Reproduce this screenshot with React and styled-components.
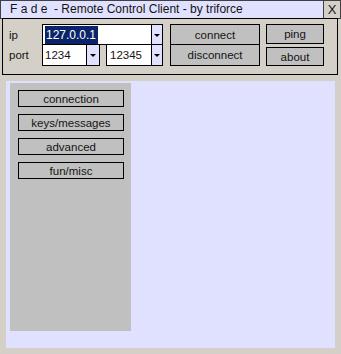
import React from 'react';
import styled, { createGlobalStyle } from 'styled-components';

const Global = createGlobalStyle`
  html, body { margin: 0; padding: 0; background: #d4d0c8; }
  body {
    width: 341px; height: 354px; overflow: hidden;
    font-family: "Liberation Sans", Arial, sans-serif;
    font-size: 11px; color: #141414;
  }
  * { box-sizing: border-box; }
`;

const Window = styled.div`
  width: 341px;
  height: 354px;
  display: flex;
  flex-direction: column;
`;

const TitleBar = styled.div`
  display: flex;
  height: 19px;
`;

const Title = styled.div`
  flex: 1;
  background: #e0e0ff;
  border: 1px solid #404040;
  border-right: none;
  padding-left: 9px;
  line-height: 17px;
  white-space: pre;
  font-size: 12px;
`;

const Close = styled.div`
  width: 18px;
  border: 1px solid #404040;
  display: flex;
  align-items: center;
  justify-content: center;
  font-size: 13px;
  line-height: 1;
`;

const Panel = styled.div`
  margin: -1px 0 0 2px;
  width: 336px;
  height: 57px;
  border: 1px solid #000;
  display: flex;
  padding-top: 5px;
`;

const Labels = styled.div`
  width: 39px;
  display: flex;
  flex-direction: column;
`;

const Label = styled.div`
  height: ${p => p.$h}px;
  margin-top: ${p => p.$mt || 0}px;
  padding-left: 6px;
  display: flex;
  align-items: center;
  font-size: 11.5px;
`;

const FormCol = styled.div`
  width: 121px;
  display: flex;
  flex-direction: column;
`;

const Row = styled.div`
  display: flex;
  gap: ${p => p.$gap || 0}px;
  margin-top: ${p => p.$mt || 0}px;
`;

const Field = styled.div`
  width: ${p => p.$w}px;
  height: ${p => p.$h}px;
  border: 1px solid #000;
  background: #fff;
  display: flex;
`;

const FieldText = styled.div`
  flex: 1;
  display: flex;
  align-items: center;
  padding-left: ${p => p.$pl || 2}px;
  font-size: 11.5px;
  color: #1a1010;
`;

const Selected = styled.span`
  background: #0a246a;
  color: #fff;
  padding: 2px 2px 2px 1px;
  font-size: 12px;
`;

const Drop = styled.div`
  width: ${p => p.$w}px;
  border-left: 1px solid #000;
  background: #e0e0ff;
  display: flex;
  align-items: center;
  justify-content: center;
  &::after {
    content: "";
    border-left: 3px solid transparent;
    border-right: 3px solid transparent;
    border-top: 3px solid #000;
    margin-top: 1px;
  }
`;

const BtnCol = styled.div`
  width: ${p => p.$w}px;
  margin-left: ${p => p.$ml}px;
  display: flex;
  flex-direction: column;
`;

const Button = styled.div`
  height: ${p => p.$h}px;
  margin-top: ${p => p.$mt || 0}px;
  background: #c0c0c0;
  border: 1px solid #000;
  display: flex;
  align-items: center;
  justify-content: center;
  font-size: 11.5px;
  color: #141414;
`;

const Content = styled.div`
  margin: 6px 0 0 6px;
  width: 329px;
  height: 267px;
  background: #e0e0ff;
  padding: 2px 0 0 4px;
`;

const Sidebar = styled.div`
  width: 121px;
  height: 248px;
  background: #c0c0c0;
  padding: 7px 0 0 8px;
  display: flex;
  flex-direction: column;
  gap: 7px;
`;

const SideButton = styled.div`
  width: 106px;
  height: 17px;
  border: 1px solid #000;
  display: flex;
  align-items: center;
  justify-content: center;
  font-size: 11.5px;
  color: #141414;
`;

export default function App() {
  return (
    <Window>
      <Global />
      <TitleBar>
        <Title>{'F a d e  - Remote Control Client - by triforce'}</Title>
        <Close>X</Close>
      </TitleBar>
      <Panel>
        <Labels>
          <Label $h={21}>ip</Label>
          <Label $h={22} $mt={-1}>port</Label>
        </Labels>
        <FormCol>
          <Row>
            <Field $w={121} $h={21}>
              <FieldText $pl={2}><Selected>127.0.0.1</Selected></FieldText>
              <Drop $w={11} />
            </Field>
          </Row>
          <Row $mt={-1} $gap={6}>
            <Field $w={58} $h={22}>
              <FieldText $pl={2}>1234</FieldText>
              <Drop $w={13} />
            </Field>
            <Field $w={57} $h={22}>
              <FieldText $pl={3}>12345</FieldText>
              <Drop $w={11} />
            </Field>
          </Row>
        </FormCol>
        <BtnCol $w={90} $ml={7}>
          <Button $h={21}>connect</Button>
          <Button $h={22} $mt={-1}>disconnect</Button>
        </BtnCol>
        <BtnCol $w={58} $ml={6}>
          <Button $h={20}>ping</Button>
          <Button $h={19} $mt={3}>about</Button>
        </BtnCol>
      </Panel>
      <Content>
        <Sidebar>
          <SideButton>connection</SideButton>
          <SideButton>keys/messages</SideButton>
          <SideButton>advanced</SideButton>
          <SideButton>fun/misc</SideButton>
        </Sidebar>
      </Content>
    </Window>
  );
}
